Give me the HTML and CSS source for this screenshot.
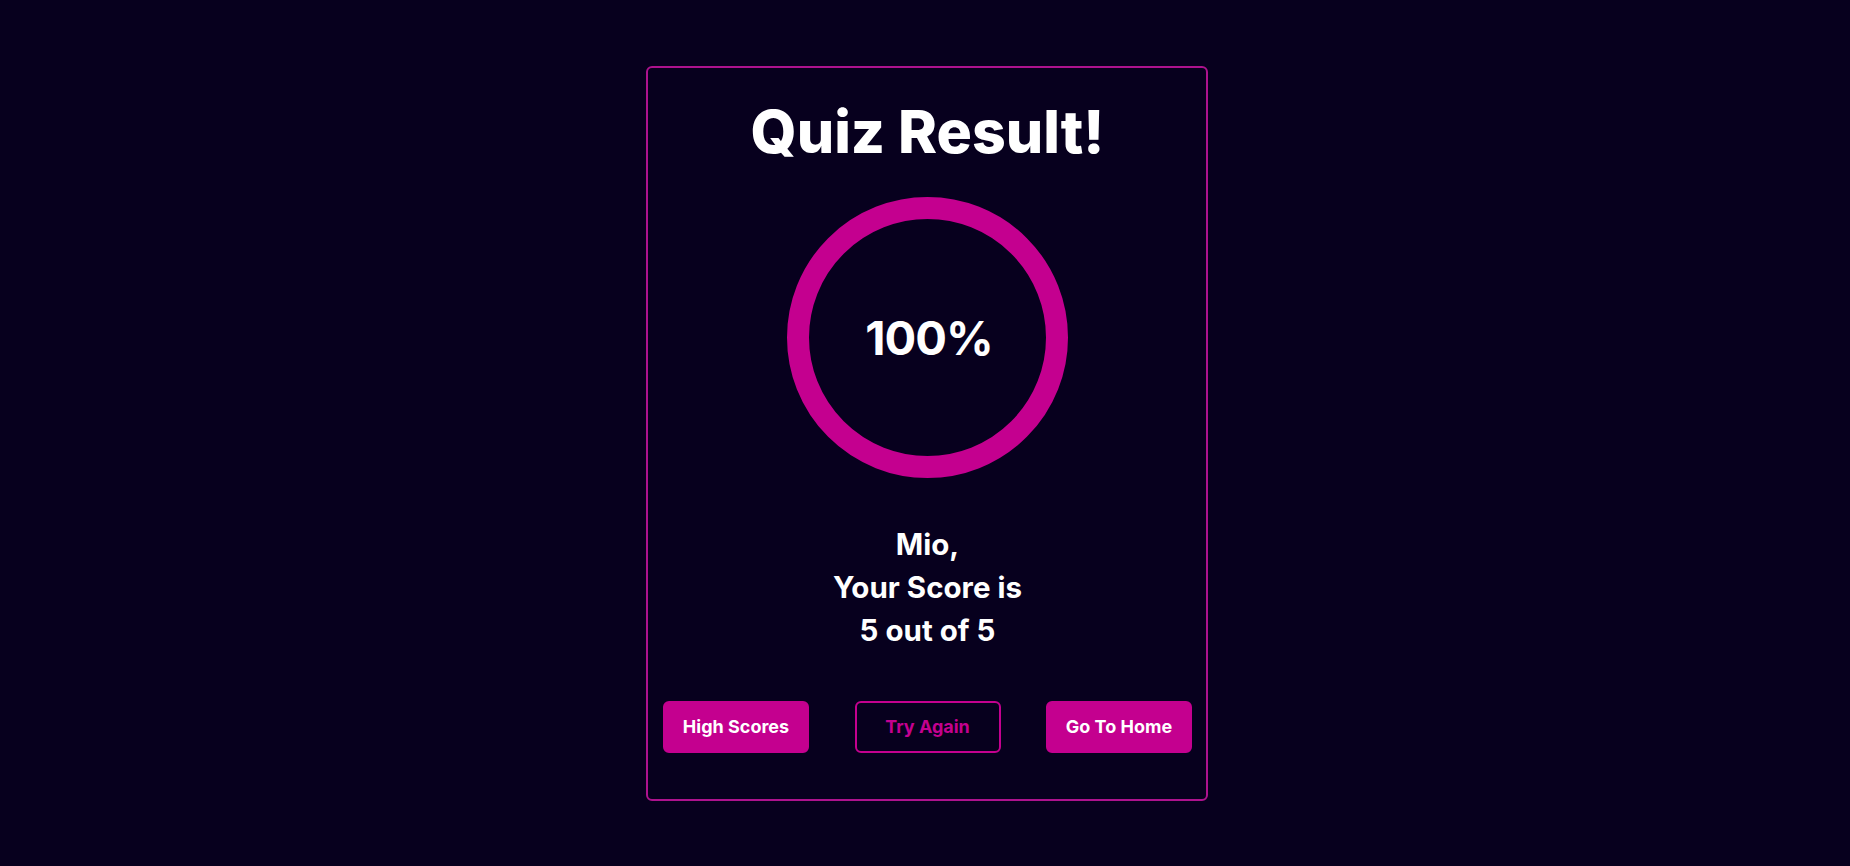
FILE: index.html
```html
<!DOCTYPE html>
<html lang="en">
<head>
<meta charset="utf-8">
<title>Quiz Result</title>
<link rel="stylesheet" href="styles.css">
</head>
<body>
<main class="card">
  <h1 class="title">Quiz Result!</h1>
  <div class="ring"><span class="percent">100%</span></div>
  <p class="score">Mio,<br>Your Score is<br>5 out of 5</p>
  <div class="actions">
    <button class="btn btn-fill">High Scores</button>
    <button class="btn btn-outline">Try Again</button>
    <button class="btn btn-fill">Go To Home</button>
  </div>
</main>
</body>
</html>
```

FILE: styles.css
```css
* { box-sizing: border-box; }

html, body {
  margin: 0;
  padding: 0;
}

body {
  min-height: 100vh;
  padding-left: 4px;
  background: #07001e;
  color: #ffffff;
  font-family: Inter, "Open Sans", "DejaVu Sans", sans-serif;
  display: flex;
  align-items: center;
  justify-content: center;
}

.card {
  width: 562px;
  border: 2px solid #ad128e;
  border-radius: 6px;
  padding: 0 14px 46px 15px;
  display: flex;
  flex-direction: column;
  align-items: center;
}

.title {
  margin: 28px 0 0;
  font-size: 59px;
  line-height: 72px;
  font-weight: 800;
  text-align: center;
}

.ring {
  margin-top: 29px;
  width: 281px;
  height: 281px;
  border-radius: 50%;
  border: 22px solid #c4008f;
  display: flex;
  align-items: center;
  justify-content: center;
}

.percent {
  font-size: 47px;
  font-weight: 700;
  letter-spacing: -1px;
  line-height: 1;
  padding-left: 3px;
}

.score {
  margin: 45px 0 0;
  font-size: 29.5px;
  line-height: 43px;
  font-weight: 700;
  text-align: center;
}

.actions {
  margin-top: 49px;
  width: 100%;
  display: flex;
  justify-content: space-between;
}

.btn {
  width: 146px;
  height: 52px;
  padding: 0;
  border-radius: 6px;
  font-family: inherit;
  font-size: 18px;
  font-weight: 700;
  cursor: pointer;
}

.btn-fill {
  background: #c4008f;
  border: 2px solid #c4008f;
  color: #ffffff;
}

.btn-outline {
  background: transparent;
  border: 2px solid #c4008f;
  color: #c4008f;
}
```
